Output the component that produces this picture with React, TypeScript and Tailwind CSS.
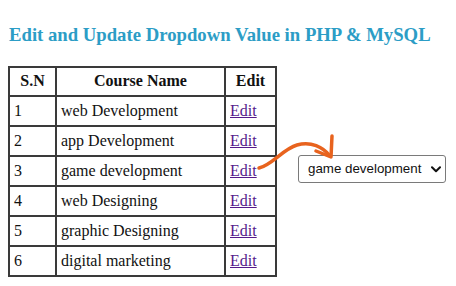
import React from "react";

const rows = [
  ["1", "web Development"],
  ["2", "app Development"],
  ["3", "game development"],
  ["4", "web Designing"],
  ["5", "graphic Designing"],
  ["6", "digital marketing"],
];

export default function App() {
  return (
    <div
      className="relative w-[456px] h-[286px] bg-white overflow-hidden text-[#111]"
      style={{ fontFamily: '"Liberation Serif", "Times New Roman", serif' }}
    >
      <h3 className="pt-[24px] pl-[9px] text-[18.72px] leading-[22px] font-bold text-[#2c9dc6]">
        Edit and Update Dropdown Value in PHP &amp; MySQL
      </h3>
      <div className="mt-[20px] ml-[8px] flex items-start">
        <div className="grid grid-cols-[47px_169px_51px] border-l-2 border-t-2 border-[#3a3a3a] text-[16px] leading-[18px]">
          <div className="h-[29px] border-r-2 border-b-2 border-[#3a3a3a] pt-[4px] text-center font-bold">S.N</div>
          <div className="h-[29px] border-r-2 border-b-2 border-[#3a3a3a] pt-[4px] text-center font-bold">Course Name</div>
          <div className="h-[29px] border-r-2 border-b-2 border-[#3a3a3a] pt-[4px] text-center font-bold">Edit</div>
          {rows.map(([n, name]) => (
            <React.Fragment key={n}>
              <div className="h-[30px] border-r-2 border-b-2 border-[#3a3a3a] pt-[5px] px-[4px]">{n}</div>
              <div className="h-[30px] border-r-2 border-b-2 border-[#3a3a3a] pt-[5px] px-[4px]">{name}</div>
              <div className="h-[30px] border-r-2 border-b-2 border-[#3a3a3a] pt-[5px] px-[4px]">
                <a href="#" className="text-[#551a8b] underline">Edit</a>
              </div>
            </React.Fragment>
          ))}
        </div>
        <div className="relative ml-[21px] mt-[89px] w-[148px] h-[28px]">
          <select
            defaultValue="game development"
            className="appearance-none w-full h-full rounded-[3px] border border-[#7a7a7a] bg-white pl-[9px] pr-[20px] text-[13.33px] text-[#111] outline-none"
            style={{ fontFamily: '"Liberation Sans", Arial, sans-serif' }}
          >
            <option>web Development</option>
            <option>app Development</option>
            <option>game development</option>
            <option>web Designing</option>
            <option>graphic Designing</option>
            <option>digital marketing</option>
          </select>
          <svg
            className="absolute right-[5px] top-[11px] pointer-events-none"
            width="10"
            height="7"
            viewBox="0 0 10 7"
          >
            <path d="M1 1.2 L5 5.2 L9 1.2" fill="none" stroke="#111" strokeWidth="2" strokeLinecap="round" strokeLinejoin="round" />
          </svg>
        </div>
      </div>
      <svg className="absolute left-0 top-0 pointer-events-none" width="456" height="286" viewBox="0 0 456 286">
        <path
          d="M259 168 C 272 165, 283 149, 297 145 C 311 141, 323 147, 330 156"
          fill="none"
          stroke="#e8631e"
          strokeWidth="3.5"
          strokeLinecap="round"
        />
        <path
          d="M332 136 L331 157 L316 151"
          fill="none"
          stroke="#e8631e"
          strokeWidth="3.5"
          strokeLinecap="round"
          strokeLinejoin="round"
        />
      </svg>
    </div>
  );
}
